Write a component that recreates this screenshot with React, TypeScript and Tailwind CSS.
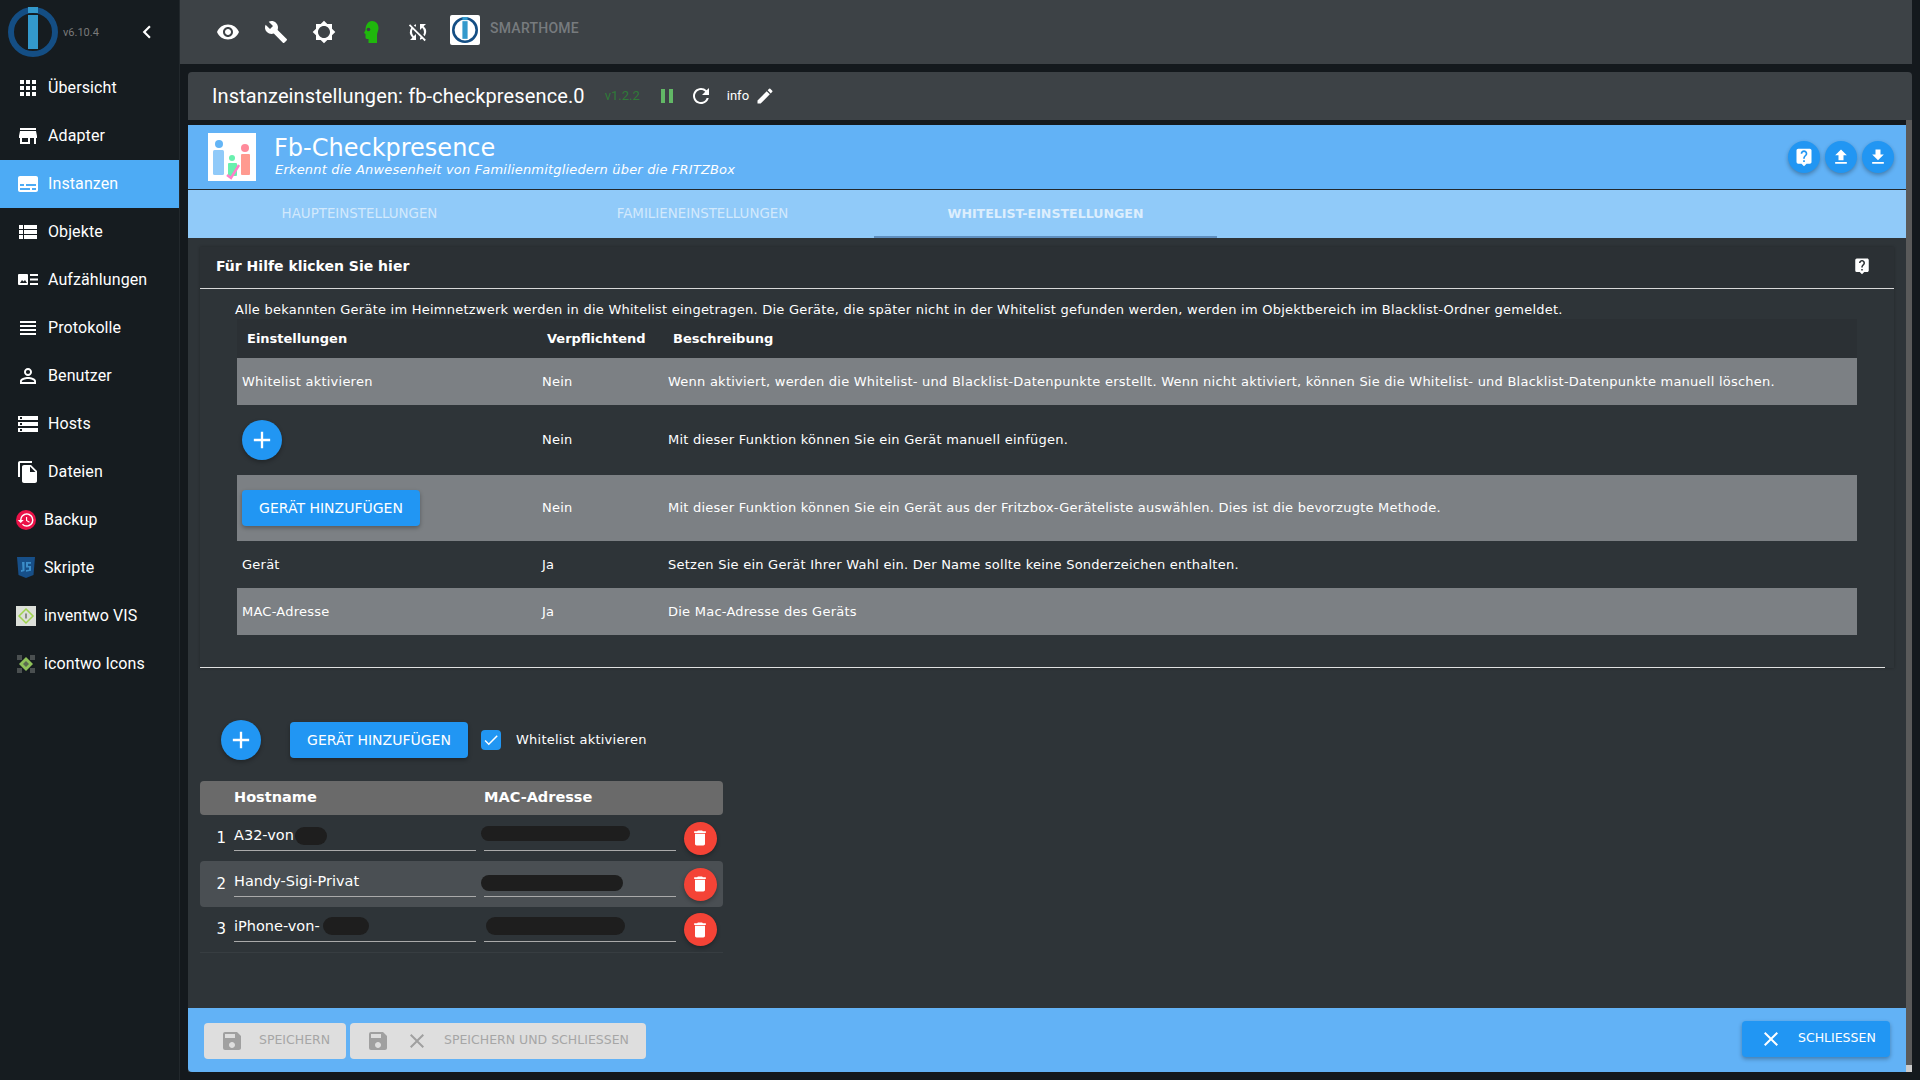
import React from "react";
import {
  MdApps, MdStore, MdSubtitles, MdViewList, MdPersonOutline, MdStorage, MdFileCopy, MdHistory,
  MdVisibility, MdBuild, MdBrightness5, MdSyncDisabled, MdChevronLeft, MdPause, MdRefresh, MdEdit,
  MdLiveHelp, MdFileUpload, MdFileDownload, MdAdd, MdDelete, MdSave, MdClose, MdCheck,
} from "react-icons/md";

const Logo = ({ size, ring = 6 }: { size: number; ring?: number }) => (
  <svg width={size} height={size} viewBox="0 0 50 50">
    <circle cx="25" cy="25" r={25 - ring / 2} fill="none" stroke="#144e84" strokeWidth={ring} />
    <rect x="20" y="-1" width="10" height="7" fill="#3399cc" />
    <rect x="20" y="8" width="10" height="34" fill="#3399cc" />
  </svg>
);

const ListIcon = () => (
  <svg width="20" height="20" viewBox="0 0 20 20" fill="#fff">
    <rect x="0" y="4" width="10" height="11" rx="1" />
    <path d="M2 13l2-3 1.5 1.5L7 10l2 3z" fill="#161c20" />
    <rect x="12" y="4" width="8" height="2" />
    <rect x="12" y="8.5" width="8" height="2" />
    <rect x="12" y="13" width="8" height="2" />
  </svg>
);

const LinesIcon = () => (
  <svg width="20" height="20" viewBox="0 0 20 20" fill="#fff">
    <rect x="2" y="3" width="16" height="2" />
    <rect x="2" y="7" width="16" height="2" />
    <rect x="2" y="11" width="16" height="2" />
    <rect x="2" y="15" width="16" height="2" />
  </svg>
);

const BackupIcon = () => (
  <div className="flex h-5 w-5 items-center justify-center rounded-full bg-[#ea1248]">
    <MdHistory size={18} color="#fff" />
  </div>
);

const JsIcon = () => (
  <svg width="20" height="22" viewBox="0 0 20 22">
    <path d="M1 0h18l-1.5 18L10 21l-7.500-3z" fill="#174f88" />
    <path d="M6 5h2.500v9L5 15v-2l1.500-.3zM15 5h-5v5.500h3v2.300l-3 .3v1.700l5-1V9h-3V6.800h3z" fill="#3b8dc9" />
  </svg>
);

const VisIcon = () => (
  <svg width="20" height="20" viewBox="0 0 20 20">
    <rect width="20" height="20" fill="#dcdfd9" />
    <path d="M10 3l7 7-7 7-7-7z" fill="none" stroke="#9fd34f" strokeWidth="1.500" />
    <rect x="9.400" y="7.500" width="1.200" height="5" fill="#555" />
  </svg>
);

const IconTwo = () => (
  <svg width="20" height="20" viewBox="0 0 20 20">
    <g fill="#4a4f50">
      <rect x="1" y="1" width="5" height="5" />
      <rect x="14" y="1" width="5" height="5" />
      <rect x="1" y="14" width="5" height="5" />
      <rect x="14" y="14" width="5" height="5" />
    </g>
    <path d="M10 3l7 7-7 7-7-7z" fill="#8fc25a" />
    <path d="M10 7l3 3-3 3-3-3z" fill="#5c6b50" />
  </svg>
);

const Head = () => (
  <svg width="24" height="24" viewBox="0 0 24 24">
    <path d="M12 1c4 0 6.500 3 6.500 7 0 3-1.500 4.500-1.500 7v8H8.500v-4H7c-1 0-1.500-.8-1.500-1.500V14L4 13l1.500-3C5.500 5 8 1 12 1z" fill="#1fb80c" />
    <circle cx="8.500" cy="9.500" r="1.800" fill="#3d4246" />
  </svg>
);

const nav: { label: string; icon: React.ReactNode; active?: boolean; img?: boolean }[] = [
  { label: "Übersicht", icon: <MdApps size={24} color="#fff" /> },
  { label: "Adapter", icon: <MdStore size={24} color="#fff" /> },
  { label: "Instanzen", icon: <MdSubtitles size={24} color="#fff" />, active: true },
  { label: "Objekte", icon: <MdViewList size={24} color="#fff" /> },
  { label: "Aufzählungen", icon: <ListIcon /> },
  { label: "Protokolle", icon: <LinesIcon /> },
  { label: "Benutzer", icon: <MdPersonOutline size={24} color="#fff" /> },
  { label: "Hosts", icon: <MdStorage size={24} color="#fff" /> },
  { label: "Dateien", icon: <MdFileCopy size={24} color="#fff" /> },
  { label: "Backup", icon: <BackupIcon />, img: true },
  { label: "Skripte", icon: <JsIcon />, img: true },
  { label: "inventwo VIS", icon: <VisIcon />, img: true },
  { label: "icontwo Icons", icon: <IconTwo />, img: true },
];

const Sidebar = () => (
  <aside className="flex h-[1080px] w-[180px] shrink-0 flex-col border-r border-[#22282c] bg-[#161c20] font-['Roboto',sans-serif] text-white">
    <div className="flex h-16 shrink-0 items-center pl-2">
      <Logo size={50} />
      <span className="ml-[5px] mt-[2px] text-[11px] text-[#7a7a7a]">v6.10.4</span>
      <MdChevronLeft size={26} color="#fff" className="ml-[35px]" />
    </div>
    {nav.map((n) => (
      <div
        key={n.label}
        className={`flex h-12 shrink-0 items-center pl-4 text-base tracking-[0.1px] ${n.active ? "bg-[#4dabf5]" : ""}`}
      >
        <div className={`flex items-center justify-center ${n.img ? "w-5" : "w-6"}`}>{n.icon}</div>
        <span className="ml-2">{n.label}</span>
      </div>
    ))}
  </aside>
);

const TopBar = () => (
  <div className="flex h-16 w-[1732px] shrink-0 items-center bg-[#3d4246] pl-6">
    {[
      <MdVisibility key="a" size={24} color="#fff" />,
      <MdBuild key="b" size={24} color="#fff" />,
      <MdBrightness5 key="c" size={24} color="#fff" />,
      <Head key="d" />,
      <MdSyncDisabled key="e" size={24} color="#fff" className="-ml-1" />,
    ].map((ic, i) => (
      <div key={i} className="flex w-12 items-center justify-center">
        {ic}
      </div>
    ))}
    <div className="ml-[6px] -mt-[4px] flex h-[30px] w-[30px] items-center justify-center rounded-[2px] bg-white">
      <Logo size={26} ring={5} />
    </div>
    <span className="ml-[10px] -mt-[8px] font-['Roboto',sans-serif] text-sm font-medium tracking-[0.25px] text-[#777b7e]">SMARTHOME</span>
  </div>
);

const TitleBar = () => (
  <div className="flex h-12 w-[1724px] shrink-0 items-center rounded-t bg-[#3d4246] pl-6 font-['Roboto',sans-serif] text-white">
    <span className="-mt-px text-[20px] tracking-[0.12px]">Instanzeinstellungen: fb-checkpresence.0</span>
    <span className="ml-[20px] text-[13px] text-[#2f7a38]">v1.2.2</span>
    <MdPause size={24} color="#62b866" className="ml-[15px]" />
    <MdRefresh size={24} color="#fff" className="ml-[10px]" />
    <span className="ml-[14px] text-[13px]">info</span>
    <MdEdit size={20} color="#fff" className="ml-[6px]" />
  </div>
);

const Fab = ({ icon, cls }: { icon: React.ReactNode; cls: string }) => (
  <div className={`flex items-center justify-center rounded-full shadow-[0_2px_4px_rgba(0,0,0,0.3)] ${cls}`}>{icon}</div>
);

const Header = () => (
  <div className="flex h-[65px] shrink-0 items-center border-b border-[#22282c] bg-[#62b2f6] pl-5 pr-3 text-white">
    <svg width="48" height="48" viewBox="0 0 48 48" className="shrink-0">
      <rect width="48" height="48" fill="#fff" />
      <circle cx="11" cy="11" r="4" fill="#64b5f6" />
      <rect x="5" y="17" width="11" height="25" rx="1.500" fill="#90caf9" />
      <circle cx="37" cy="15" r="4" fill="#ff8a9a" />
      <rect x="33" y="21" width="9" height="21" rx="1" fill="#ff9a90" />
      <circle cx="24" cy="25" r="3" fill="#69f0ae" />
      <rect x="20" y="30" width="9" height="13" rx="1" fill="#69f0ae" />
      <path d="M19 42l4 3 8-13" fill="none" stroke="#ff80c8" strokeWidth="2.500" />
    </svg>
    <div className="ml-[19px] flex flex-col font-['DejaVu_Sans',sans-serif]">
      <span className="-ml-px text-[24px] leading-[24px]">Fb-Checkpresence</span>
      <span className="mt-[2px] text-[13px] italic leading-[16px] tracking-[0.18px]">Erkennt die Anwesenheit von Familienmitgliedern über die FRITZBox</span>
    </div>
    <div className="ml-auto flex gap-[5px]">
      <Fab cls="h-8 w-8 bg-[#2196f3]" icon={<MdLiveHelp size={20} color="#fff" />} />
      <Fab cls="h-8 w-8 bg-[#2196f3]" icon={<MdFileUpload size={20} color="#fff" />} />
      <Fab cls="h-8 w-8 bg-[#2196f3]" icon={<MdFileDownload size={20} color="#fff" />} />
    </div>
  </div>
);

const Tabs = () => (
  <div className="flex h-12 shrink-0 bg-[#90caf9] font-['DejaVu_Sans',sans-serif] text-[13.400px] text-white/60">
    <div className="flex w-[343px] items-center justify-center border-b-2 border-transparent pt-[2px]">HAUPTEINSTELLUNGEN</div>
    <div className="flex w-[343px] items-center justify-center border-b-2 border-transparent pt-[2px]">FAMILIENEINSTELLUNGEN</div>
    <div className="flex w-[343px] items-center justify-center border-b-2 border-[#5f8fbf] pt-[2px] text-[12.600px] font-bold text-white/70">WHITELIST-EINSTELLUNGEN</div>
  </div>
);

const body = "text-[13px] tracking-[0.24px]";

const rows: { a: React.ReactNode; b: string; c: string; h: string; gray: boolean }[] = [
  {
    a: "Whitelist aktivieren",
    b: "Nein",
    c: "Wenn aktiviert, werden die Whitelist- und Blacklist-Datenpunkte erstellt. Wenn nicht aktiviert, können Sie die Whitelist- und Blacklist-Datenpunkte manuell löschen.",
    h: "h-[47px]",
    gray: true,
  },
  {
    a: (
      <div className="flex h-10 w-10 items-center justify-center rounded-full bg-[#2196f3] shadow-[0_2px_4px_rgba(0,0,0,0.3)]">
        <MdAdd size={28} color="#fff" />
      </div>
    ),
    b: "Nein",
    c: "Mit dieser Funktion können Sie ein Gerät manuell einfügen.",
    h: "h-[70px]",
    gray: false,
  },
  {
    a: (
      <div className="flex h-9 w-[178px] items-center justify-center rounded-sm bg-[#2196f3] text-sm tracking-normal shadow-[0_2px_4px_rgba(0,0,0,0.3)]">
        GERÄT HINZUFÜGEN
      </div>
    ),
    b: "Nein",
    c: "Mit dieser Funktion können Sie ein Gerät aus der Fritzbox-Geräteliste auswählen. Dies ist die bevorzugte Methode.",
    h: "h-[66px]",
    gray: true,
  },
  {
    a: "Gerät",
    b: "Ja",
    c: "Setzen Sie ein Gerät Ihrer Wahl ein. Der Name sollte keine Sonderzeichen enthalten.",
    h: "h-[47px]",
    gray: false,
  },
  { a: "MAC-Adresse", b: "Ja", c: "Die Mac-Adresse des Geräts", h: "h-[47px]", gray: true },
];

const HelpCard = () => (
  <div className="mx-3 mt-[9px] shrink-0 bg-[#2e3438] shadow-[0_0_3px_rgba(0,0,0,0.25)]">
    <div className="flex h-[42px] items-center justify-between border-b border-[#d8d8d8] bg-[#2b3034] pb-[3px] pl-[16px] pr-[23px] text-sm font-bold">
      <span>Für Hilfe klicken Sie hier</span>
      <MdLiveHelp size={18} color="#fff" />
    </div>
    <div className="px-[37px] pt-[12px]">
      <div className={`-ml-[2px] whitespace-nowrap leading-[18px] ${body}`}>
        Alle bekannten Geräte im Heimnetzwerk werden in die Whitelist eingetragen. Die Geräte, die später nicht in der Whitelist gefunden werden, werden im Objektbereich im Blacklist-Ordner gemeldet.
      </div>
      <div className="grid h-[39px] grid-cols-[300px_126px_1fr] items-center bg-[#2b3034] pl-[10px] text-[13px] font-bold">
        <span>Einstellungen</span>
        <span>Verpflichtend</span>
        <span>Beschreibung</span>
      </div>
      {rows.map((r, i) => (
        <div
          key={i}
          className={`grid grid-cols-[300px_126px_1fr] items-center pl-[5px] ${body} ${r.h} ${r.gray ? "bg-[#7c8084]" : ""}`}
        >
          <div>{r.a}</div>
          <span>{r.b}</span>
          <span className="whitespace-nowrap">{r.c}</span>
        </div>
      ))}
    </div>
    <div className="mt-[32px] mr-[9px] h-[1px] bg-[#e0e0e0]" />
  </div>
);

const devices = [
  { host: "A32-von", blobA: "left-[61px] top-[1px] w-[32px] h-[18px]", blobB: "left-[-3px] top-[0px] w-[149px] h-[15px]" },
  { host: "Handy-Sigi-Privat", blobA: "", blobB: "left-[-3px] top-[3px] w-[142px] h-[16px]" },
  { host: "iPhone-von-", blobA: "left-[89px] top-[0px] w-[46px] h-[18px]", blobB: "left-[2px] top-[0px] w-[139px] h-[18px]" },
];

const DeviceTable = () => (
  <div className="mx-3 w-[523px]">
    <div className="grid h-[34px] grid-cols-[30px_250px_200px_43px] items-center rounded-sm bg-[#6a6a6a] text-[14.500px] font-bold">
      <span />
      <span className="pl-1">Hostname</span>
      <span className="pl-1">MAC-Adresse</span>
      <span />
    </div>
    {devices.map((d, i) => (
      <div
        key={d.host}
        className={`grid h-[46px] grid-cols-[30px_250px_200px_43px] items-center text-[14.500px] ${i === 1 ? "rounded-sm bg-[#4a4f53]" : ""} ${i === 2 ? "border-b border-[#373d41]" : ""}`}
      >
        <span className="pr-1 text-right text-[15px]">{i + 1}</span>
        <div className="pl-1 pr-1">
          <div className="relative flex h-[25px] items-start border-b border-[#aaaaaa]">
            <span className="-mt-[1px]">{d.host}</span>
            {d.blobA && <div className={`absolute rounded-full bg-[#1e1e1e] ${d.blobA}`} />}
          </div>
        </div>
        <div className="pl-1">
          <div className="relative h-[25px] w-[192px] border-b border-[#aaaaaa]">
            <div className={`absolute rounded-full bg-[#1e1e1e] ${d.blobB}`} />
          </div>
        </div>
        <div className="flex justify-center pr-[3px]">
          <div className="flex h-[33px] w-[33px] items-center justify-center rounded-full bg-[#f44336] shadow-[0_2px_4px_rgba(0,0,0,0.3)]">
            <MdDelete size={20} color="#fff" />
          </div>
        </div>
      </div>
    ))}
  </div>
);

const Footer = () => (
  <div className="flex h-16 shrink-0 items-center rounded-bl bg-[#62b2f6] pl-4 pr-4 text-[12.500px]">
    <div className="mt-[1px] flex h-9 w-[142px] items-center rounded-sm bg-[#dedede] pl-[16px] text-[#a6a6a6]">
      <MdSave size={24} color="#a0a0a0" />
      <span className="ml-[15px]">SPEICHERN</span>
    </div>
    <div className="ml-1 mt-[1px] flex h-9 w-[296px] items-center rounded-sm bg-[#dedede] pl-[16px] text-[#a6a6a6]">
      <MdSave size={24} color="#a0a0a0" />
      <MdClose size={24} color="#a0a0a0" className="ml-[15px]" />
      <span className="ml-[15px]">SPEICHERN UND SCHLIESSEN</span>
    </div>
    <div className="ml-auto -mt-[3px] flex h-9 w-[148px] items-center rounded-sm bg-[#2196f3] pl-[17px] text-white shadow-[0_2px_4px_rgba(0,0,0,0.3)]">
      <MdClose size={24} color="#fff" />
      <span className="ml-[15px]">SCHLIESSEN</span>
    </div>
  </div>
);

export default function App() {
  return (
    <div className="flex h-[1080px] w-[1920px] overflow-hidden bg-[#14191d] text-white">
      <Sidebar />
      <div className="flex min-w-0 flex-1 flex-col">
        <TopBar />
        <div className="ml-2 mt-2 flex flex-col">
          <TitleBar />
          <div className="flex h-[952px]">
            <div className="flex w-[1718px] flex-col pt-[5px] font-['DejaVu_Sans',sans-serif]">
              <Header />
              <Tabs />
              <div className="flex min-h-0 flex-1 flex-col bg-[#2e3438]">
                <HelpCard />
                <div className="flex h-[113px] shrink-0 items-center pl-[33px] pt-[30px]">
                  <div className="flex h-10 w-10 items-center justify-center rounded-full bg-[#2196f3] shadow-[0_2px_4px_rgba(0,0,0,0.3)]">
                    <MdAdd size={28} color="#fff" />
                  </div>
                  <div className="ml-[29px] flex h-9 w-[178px] items-center justify-center rounded-sm bg-[#2196f3] text-sm shadow-[0_2px_4px_rgba(0,0,0,0.3)]">
                    GERÄT HINZUFÜGEN
                  </div>
                  <div className="ml-[13px] flex h-5 w-5 items-center justify-center rounded-sm bg-[#2196f3]">
                    <MdCheck size={18} color="#fff" />
                  </div>
                  <span className={`ml-[15px] ${body}`}>Whitelist aktivieren</span>
                </div>
                <DeviceTable />
                <div className="flex-1" />
                <Footer />
              </div>
            </div>
            <div className="flex w-[6px] flex-col justify-end bg-[#5a5a5a]">
              <div className="h-[7px] bg-[#cccccc]" />
            </div>
          </div>
        </div>
      </div>
    </div>
  );
}
